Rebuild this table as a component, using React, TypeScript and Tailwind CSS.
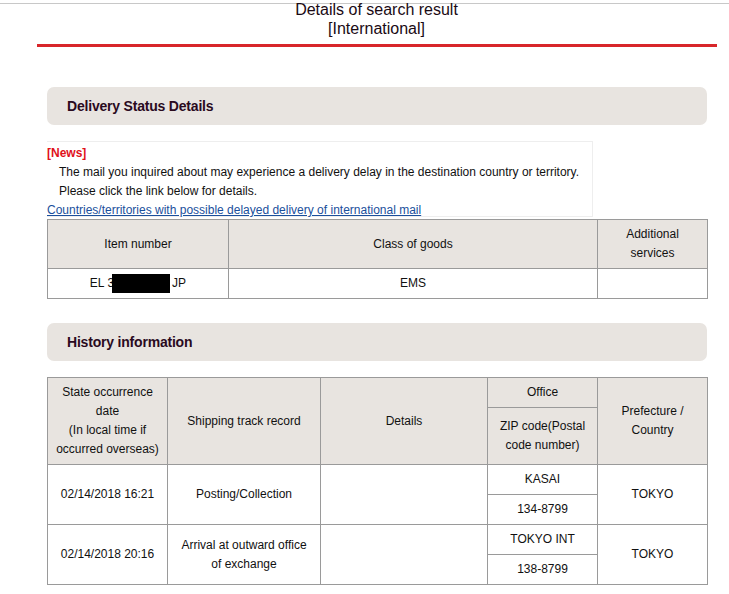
import React from "react";

const cell = "border border-[#9a9a9a] text-center align-middle px-1 leading-[19px]";
const head = `${cell} bg-[#e8e4e0]`;

function SectionBar({ title }: { title: string }) {
  return (
    <div className="ml-[47px] mr-[22px] h-[38px] rounded-[7px] bg-[#e8e4e0] flex items-center pl-5">
      <h2 className="text-[14px] font-bold text-[#2a0a1e] tracking-[-0.2px]">{title}</h2>
    </div>
  );
}

export default function App() {
  return (
    <div
      className="w-[729px] h-[594px] overflow-hidden bg-white text-[12px] text-[#111]"
      style={{ fontFamily: '"Liberation Sans", Arial, sans-serif' }}
    >
      <div className="mt-[3px] border-t border-[#c8c8c8]" />
      <div className="text-center text-[16px] leading-[19px] text-[#1a0a14] -mt-[4px] pl-[24px]">
        <div>Details of search result</div>
        <div>[International]</div>
      </div>
      <div className="ml-[37px] mr-[12px] mt-[6px] h-[3px] bg-[#d8262a]" />

      <div className="mt-[40px]">
        <SectionBar title="Delivery Status Details" />
      </div>

      <div className="ml-[47px] mt-[16px] w-[546px] h-[76px] border border-[#eeeeee] border-l-0 pt-[2px]">
        <div className="text-[#e0101a] font-semibold leading-[19px]">[News]</div>
        <div className="pl-3 leading-[19px]">
          The mail you inquired about may experience a delivery delay in the destination country or territory.
        </div>
        <div className="pl-3 leading-[19px]">Please click the link below for details.</div>
        <a href="#" className="block text-[#1a4f9c] underline leading-[18px]">
          Countries/territories with possible delayed delivery of international mail
        </a>
      </div>

      <table className="ml-[47px] mt-[2px] w-[660px] border-collapse table-fixed">
        <colgroup>
          <col className="w-[181px]" />
          <col className="w-[369px]" />
          <col className="w-[110px]" />
        </colgroup>
        <tbody>
          <tr className="h-[49px]">
            <td className={head}>Item number</td>
            <td className={head}>Class of goods</td>
            <td className={head}>Additional<br />services</td>
          </tr>
          <tr className="h-[30px]">
            <td className={cell}>
              <span className="inline-flex items-center">
                EL 3<span className="inline-block w-[58px] h-[19px] bg-black -ml-[2px] mr-[2px]" />JP
              </span>
            </td>
            <td className={cell}>EMS</td>
            <td className={cell}></td>
          </tr>
        </tbody>
      </table>

      <div className="mt-[24px]">
        <SectionBar title="History information" />
      </div>

      <table className="ml-[47px] mt-[16px] w-[660px] border-collapse table-fixed">
        <colgroup>
          <col className="w-[120px]" />
          <col className="w-[153px]" />
          <col className="w-[167px]" />
          <col className="w-[110px]" />
          <col className="w-[110px]" />
        </colgroup>
        <tbody>
          <tr className="h-[30px]">
            <td rowSpan={2} className={head}>
              State occurrence<br />date<br />(In local time if<br />occurred overseas)
            </td>
            <td rowSpan={2} className={head}>Shipping track record</td>
            <td rowSpan={2} className={head}>Details</td>
            <td className={head}>Office</td>
            <td rowSpan={2} className={head}>Prefecture /<br />Country</td>
          </tr>
          <tr className="h-[57px]">
            <td className={head}>ZIP code(Postal<br />code number)</td>
          </tr>
          <tr className="h-[30px]">
            <td rowSpan={2} className={cell}>02/14/2018 16:21</td>
            <td rowSpan={2} className={cell}>Posting/Collection</td>
            <td rowSpan={2} className={cell}></td>
            <td className={cell}>KASAI</td>
            <td rowSpan={2} className={cell}>TOKYO</td>
          </tr>
          <tr className="h-[30px]">
            <td className={cell}>134-8799</td>
          </tr>
          <tr className="h-[30px]">
            <td rowSpan={2} className={cell}>02/14/2018 20:16</td>
            <td rowSpan={2} className={cell}>Arrival at outward office<br />of exchange</td>
            <td rowSpan={2} className={cell}></td>
            <td className={cell}>TOKYO INT</td>
            <td rowSpan={2} className={cell}>TOKYO</td>
          </tr>
          <tr className="h-[30px]">
            <td className={cell}>138-8799</td>
          </tr>
        </tbody>
      </table>
    </div>
  );
}
